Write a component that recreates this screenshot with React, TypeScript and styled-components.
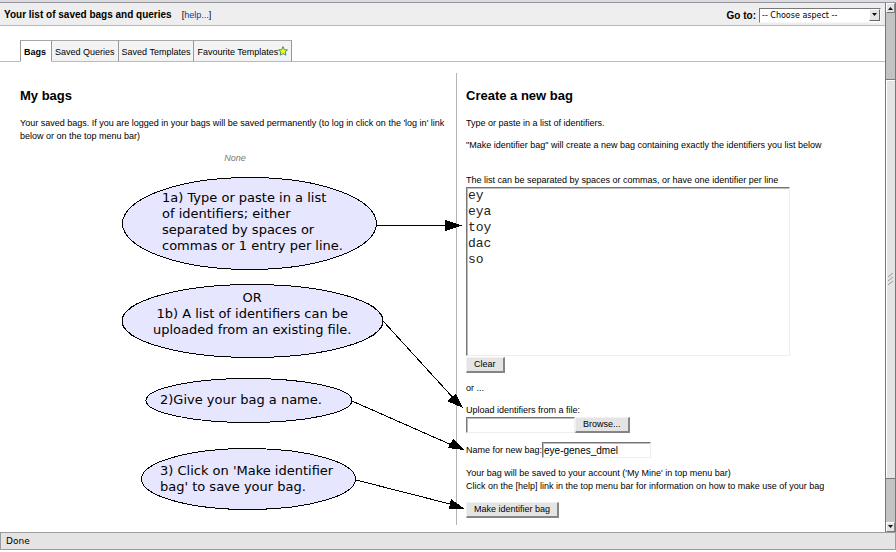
import React from 'react';
import styled, { createGlobalStyle } from 'styled-components';

const GlobalStyle = createGlobalStyle`
  * { box-sizing: border-box; }
  body {
    margin: 0;
    background: #fff;
    color: #000;
    font-family: "Liberation Sans", Arial, sans-serif;
    font-size: 9px;
    line-height: 13px;
  }
  h1, h2, p { margin: 0; }
`;

const Window = styled.div`
  display: flex;
  flex-direction: column;
  min-height: 100vh;
  padding-bottom: 2px;
`;

const TopEdge = styled.div`
  height: 3px;
  background: #dcdcdc;
  border-bottom: 1px solid #9494a0;
`;

const Body = styled.div`
  display: flex;
  flex: 1;
`;

const Page = styled.main`
  display: flex;
  flex-direction: column;
  flex: 1;
  min-width: 0;
`;

const Header = styled.header`
  display: flex;
  align-items: center;
  height: 23px;
  padding: 2px 4px 0;
  background: #eee;
  border-bottom: 1px solid #b8b8b8;
`;

const Title = styled.h1`
  font-size: 10px;
  line-height: 14px;
`;

const Help = styled.span`
  flex: 1;
  margin-left: 10px;
  a { color: #003c9c; text-decoration: none; }
`;

const GoTo = styled.label`
  margin-right: 3px;
  font-size: 10px;
  font-weight: bold;
`;

const SelectWrap = styled.div`
  position: relative;
  display: flex;
  width: 122px;
`;

const Select = styled.select`
  appearance: none;
  width: 100%;
  height: 15px;
  padding: 0 2px;
  border: 1px solid #f6f6f6;
  border-top: 1px solid #777;
  border-left: 1px solid #777;
  border-radius: 0;
  background: #fff;
  color: #000;
  font-family: "DejaVu Sans", sans-serif;
  font-size: 8px;
`;

const SelectArrow = styled.span`
  position: absolute;
  top: 1px;
  right: 1px;
  display: grid;
  place-items: center;
  width: 11px;
  height: 12px;
  background: #e4e4e4;
  border: 1px solid #fff;
  border-right-color: #666;
  border-bottom-color: #666;
  pointer-events: none;
`;

const Tabs = styled.nav`
  display: flex;
  height: 36px;
  padding: 14px 0 0 20px;
  box-shadow: inset 0 -1px #bbb;
`;

const Tab = styled.a<{ $active?: boolean }>`
  display: flex;
  align-items: center;
  padding: 2px 3px 0;
  border-top: 1px solid #a8a8a8;
  border-right: 1px solid #999;
  border-bottom: 1px solid ${p => (p.$active ? '#fff' : '#bbb')};
  background: ${p => (p.$active ? '#fff' : '#f3f3f3')};
  color: #000;
  font-weight: ${p => (p.$active ? 'bold' : 'normal')};
  text-decoration: none;
  white-space: nowrap;
  &:first-child { border-left: 1px solid #999; padding-right: 5px; }
  svg { margin-bottom: 3px; }
`;

const Stage = styled.div`
  position: relative;
  display: grid;
  grid-template-columns: 456fr 429fr;
  padding: 11px 0 7px;
  flex: 1;
`;

const Column = styled.section`
  padding: 15px 6px 0 20px;
`;

const FormColumn = styled.section`
  padding: 15px 0 0 9px;
  border-left: 1px solid #b4b4b4;
`;

const Heading = styled.h2`
  margin-bottom: 13px;
  font-size: 13px;
  line-height: 16px;
`;

const Empty = styled.p`
  margin-top: 9px;
  color: #777;
  font-style: italic;
  text-align: center;
`;

const Text = styled.p<{ $gap?: number }>`
  margin-bottom: ${p => p.$gap ?? 0}px;
`;

const FieldLabel = styled.label`
  display: block;
`;

const List = styled.textarea`
  display: block;
  width: 324px;
  height: 169px;
  margin-bottom: 1px;
  padding: 0;
  border: 1px solid #eee;
  border-top: 1px solid #777;
  border-left: 1px solid #777;
  box-shadow: inset 1px 1px #bbb;
  background: #fff;
  color: #222;
  font-family: "Liberation Mono", "Courier New", monospace;
  font-size: 13px;
  line-height: 16px;
  padding-left: 1px;
  resize: none;
  outline: none;
`;

const Button = styled.button`
  height: 16px;
  padding: 0 7px;
  border: 1px solid #f2f2f2;
  border-right: 2px solid #858585;
  border-bottom: 2px solid #858585;
  background: #e4e4e4;
  color: #000;
  font-family: "Liberation Sans", Arial, sans-serif;
  font-size: 9px;
  line-height: 13px;
`;

const TextInput = styled.input`
  width: 109px;
  height: 16px;
  padding: 0 1px;
  border: 1px solid #eee;
  border-top: 1px solid #777;
  border-left: 1px solid #777;
  box-shadow: inset 1px 1px #bbb;
  background: #fff;
  color: #000;
  font-family: "Liberation Sans", Arial, sans-serif;
  font-size: 10px;
  outline: none;
`;

const Row = styled.div<{ $gap?: number }>`
  display: flex;
  align-items: center;
  margin-bottom: ${p => p.$gap ?? 0}px;
`;

const Scrollbar = styled.div`
  display: flex;
  flex-direction: column;
  width: 11px;
  border-left: 1px solid #777;
  border-right: 1px solid #777;
  background: #c3c3c3;
`;

const ScrollButton = styled.button`
  display: grid;
  place-items: center;
  width: 9px;
  height: 10px;
  padding: 0;
  border: 1px solid #fff;
  border-right-color: #888;
  border-bottom-color: #777;
  background: #e4e4e4;
`;

const Track = styled.div<{ $share: number }>`
  flex: ${p => p.$share};
`;

const Thumb = styled.div`
  display: grid;
  place-items: center;
  flex: 401;
  border: 1px solid #777;
  border-width: 1px 0;
  background: #e4e4e4;
  box-shadow: inset 1px 1px #fff;
`;

const StatusBar = styled.footer`
  height: 18px;
  padding: 0 5px;
  border: 1px solid #9c9c9c;
  background: #e4e4e4;
  font-family: "DejaVu Sans", sans-serif;
  line-height: 16px;
`;

const Annotations = styled.div`
  position: absolute;
  inset: 0;
  pointer-events: none;
  svg { position: absolute; top: 0; left: 0; }
`;

const Callout = styled.p<{ $x: number; $y: number; $center?: boolean }>`
  position: absolute;
  left: ${p => p.$x}px;
  top: ${p => p.$y}px;
  font-family: "DejaVu Sans", sans-serif;
  font-size: 13px;
  line-height: 16px;
  text-align: ${p => (p.$center ? 'center' : 'left')};
  white-space: pre;
`;

const Caret = ({ up = false }: { up?: boolean }) => (
  <svg width="5" height="3" viewBox="0 0 5 3" aria-hidden="true">
    <path d={up ? 'M0 3L2.5 0L5 3Z' : 'M0 0H5L2.5 3Z'} fill="#111" />
  </svg>
);

const Star = () => (
  <svg width="10" height="10" viewBox="0 0 10 10" aria-hidden="true">
    <path d="M5 .6L6.3 3.7L9.5 3.9L7.1 6L7.9 9.2L5 7.6L2.1 9.2L2.9 6L.5 3.9L3.7 3.7Z" fill="#ff0" stroke="#398f86" strokeWidth="1" />
  </svg>
);

const Shapes = () => (
  <svg width="480" height="460" viewBox="0 62 480 460" aria-hidden="true" shapeRendering="crispEdges">
    <g fill="#e6e6ff" stroke="#000">
      <ellipse cx="249.5" cy="223.5" rx="127" ry="46" />
      <ellipse cx="252.5" cy="321" rx="130.5" ry="36.5" />
      <ellipse cx="249" cy="400.5" rx="103" ry="22" />
      <ellipse cx="248.5" cy="479" rx="107" ry="30.5" />
    </g>
    <g stroke="#000">
      <path d="M377 225.5H450M383 321L456 401M352 401L454 446M356 480L454 505" fill="none" />
      <path d="M445 220V231L462 225.5ZM463 408L447 401L456 394ZM464 450L448 448L453 439ZM465 509L449 509L451 499Z" stroke="none" />
    </g>
  </svg>
);

export default function App() {
  return (
    <>
      <GlobalStyle />
      <Window>
        <TopEdge />
        <Body>
          <Page>
            <Header>
              <Title>Your list of saved bags and queries</Title>
              <Help>[<a href="#help">help...</a>]</Help>
              <GoTo htmlFor="aspect">Go to:</GoTo>
              <SelectWrap>
                <Select id="aspect"><option>-- Choose aspect --</option></Select>
                <SelectArrow><Caret /></SelectArrow>
              </SelectWrap>
            </Header>
            <Tabs>
              <Tab href="#bags" $active>Bags</Tab>
              <Tab href="#queries">Saved Queries</Tab>
              <Tab href="#templates">Saved Templates</Tab>
              <Tab href="#favourites">Favourite Templates <Star /></Tab>
            </Tabs>
            <Stage>
              <Column>
                <Heading>My bags</Heading>
                <Text>
                  Your saved bags. If you are logged in your bags will be saved permanently (to log in click on the 'log in' link below or on the top menu bar)
                </Text>
                <Empty>None</Empty>
              </Column>
              <FormColumn>
                <Heading>Create a new bag</Heading>
                <Text $gap={9}>Type or paste in a list of identifiers.</Text>
                <Text $gap={22}>"Make identifier bag" will create a new bag containing exactly the identifiers you list below</Text>
                <FieldLabel htmlFor="ids">The list can be separated by spaces or commas, or have one identifier per line</FieldLabel>
                <List id="ids" defaultValue={'ey\neya\ntoy\ndac\nso'} />
                <Row $gap={9}><Button type="button">Clear</Button></Row>
                <Text $gap={9}>or ...</Text>
                <FieldLabel htmlFor="file">Upload identifiers from a file:</FieldLabel>
                <Row $gap={9}>
                  <TextInput id="file" />
                  <Button type="button">Browse...</Button>
                </Row>
                <Row $gap={9}>
                  <FieldLabel htmlFor="name">Name for new bag:</FieldLabel>
                  <TextInput id="name" defaultValue="eye-genes_dmel" />
                </Row>
                <Text>Your bag will be saved to your account ('My Mine' in top menu bar)</Text>
                <Text $gap={9}>Click on the [help] link in the top menu bar for information on how to make use of your bag</Text>
                <Button type="submit">Make identifier bag</Button>
              </FormColumn>
              <Annotations>
                <Shapes />
                <Callout $x={162} $y={128}>{'1a) Type or paste in a list\nof identifiers; either\nseparated by spaces or\ncommas or 1 entry per line.'}</Callout>
                <Callout $x={153} $y={228} $center>{'OR\n1b) A list of identifiers can be\nuploaded from an existing file.'}</Callout>
                <Callout $x={160} $y={330}>2)Give your bag a name.</Callout>
                <Callout $x={160} $y={401}>{"3) Click on 'Make identifier\nbag' to save your bag."}</Callout>
              </Annotations>
            </Stage>
          </Page>
          <Scrollbar>
            <ScrollButton aria-label="Scroll up"><Caret up /></ScrollButton>
            <Track $share={67} />
            <Thumb>
              <svg width="5" height="12" viewBox="0 0 5 12" aria-hidden="true">
                <path d="M0 4L5 0M0 8L5 4M0 12L5 8" stroke="#999" />
              </svg>
            </Thumb>
            <Track $share={43} />
            <ScrollButton aria-label="Scroll down"><Caret /></ScrollButton>
          </Scrollbar>
        </Body>
        <StatusBar>Done</StatusBar>
      </Window>
    </>
  );
}
